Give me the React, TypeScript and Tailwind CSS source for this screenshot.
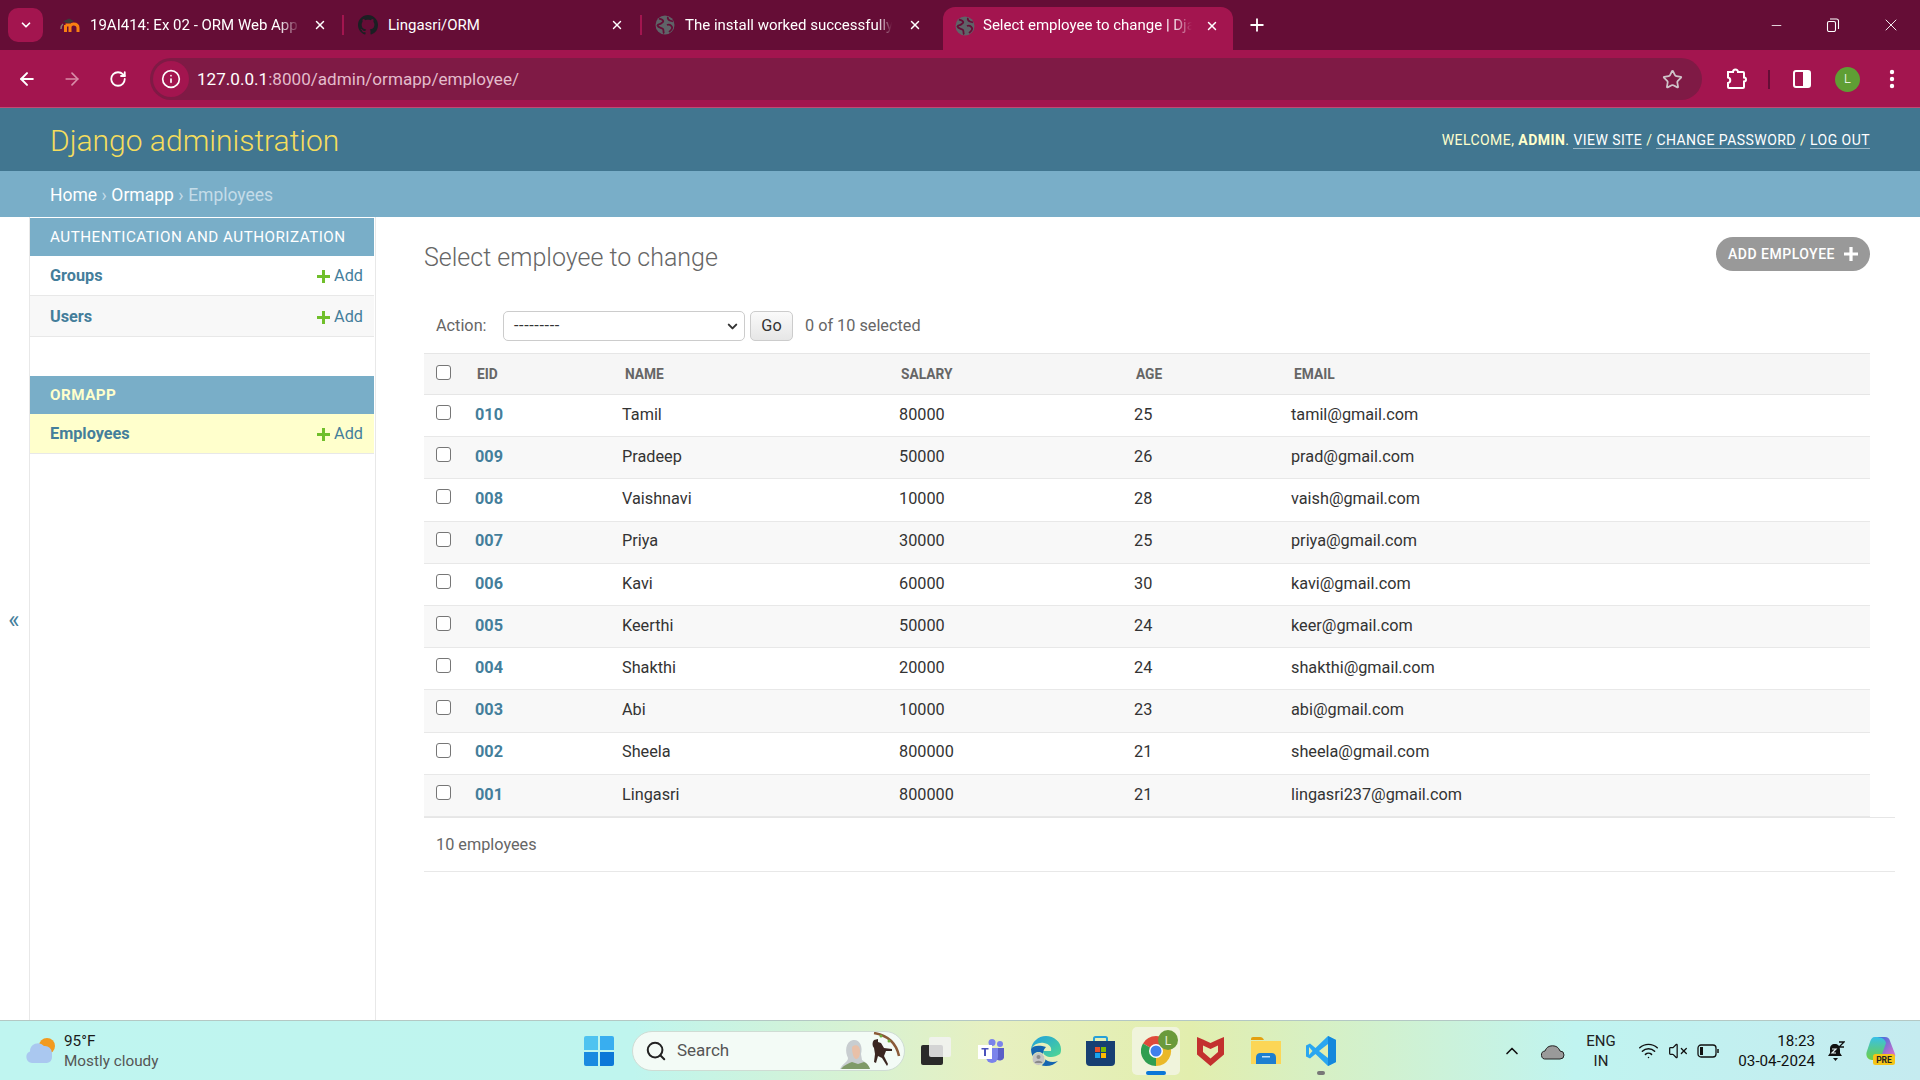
import React from "react";
import { ArrowLeft, ArrowRight, RotateCw, Info, Star, ChevronDown, X, Plus, Minus, ChevronUp, VolumeX, Wifi, Search } from "lucide-react";

const rows = [
  ["010", "Tamil", "80000", "25", "tamil@gmail.com"],
  ["009", "Pradeep", "50000", "26", "prad@gmail.com"],
  ["008", "Vaishnavi", "10000", "28", "vaish@gmail.com"],
  ["007", "Priya", "30000", "25", "priya@gmail.com"],
  ["006", "Kavi", "60000", "30", "kavi@gmail.com"],
  ["005", "Keerthi", "50000", "24", "keer@gmail.com"],
  ["004", "Shakthi", "20000", "24", "shakthi@gmail.com"],
  ["003", "Abi", "10000", "23", "abi@gmail.com"],
  ["002", "Sheela", "800000", "21", "sheela@gmail.com"],
  ["001", "Lingasri", "800000", "21", "lingasri237@gmail.com"],
];

function Globe() {
  return (
    <svg width="20" height="20" viewBox="0 0 20 20" className="shrink-0">
      <circle cx="10" cy="10" r="9.500" fill="#5f6368" />
      <path d="M4 3.500c2 1 3 .5 4 2s-1 2-2 3-3 0-3.500 2C3 13 7 12.500 8 14s0 3 1 4.500M13 2c-1 2 1 3 2 3.500s2 .5 3 1M12 10c2-1 4 0 5 2s-2 4-3 5" stroke="#650d36" strokeWidth="1.800" fill="none" />
    </svg>
  );
}

function Github() {
  return (
    <svg width="20" height="20" viewBox="0 0 16 16" fill="#1b1f23" className="shrink-0">
      <path d="M8 0C3.580 0 0 3.580 0 8c0 3.540 2.290 6.530 5.470 7.590.4.070.55-.17.55-.38 0-.19-.01-.82-.01-1.490-2.010.37-2.530-.49-2.690-.94-.09-.23-.48-.94-.82-1.130-.28-.15-.68-.52-.01-.53.63-.01 1.080.58 1.230.82.720 1.210 1.870.87 2.330.66.070-.52.280-.87.510-1.070-1.780-.2-3.640-.89-3.640-3.950 0-.87.310-1.590.820-2.150-.080-.2-.360-1.020.080-2.120 0 0 .670-.210 2.200.820.640-.180 1.320-.270 2-.270s1.360.090 2 .270c1.530-1.040 2.200-.820 2.200-.820.440 1.100.160 1.920.080 2.120.510.560.820 1.270.820 2.150 0 3.070-1.870 3.750-3.650 3.950.290.250.540.730.540 1.480 0 1.070-.010 1.930-.010 2.200 0 .210.150.460.550.380A8.010 8.010 0 0 0 16 8c0-4.420-3.580-8-8-8z" />
    </svg>
  );
}

function Moodle() {
  return (
    <svg width="20" height="20" viewBox="0 0 20 20" className="shrink-0">
      <path d="M1 14c0-3 .5-4 2-5" stroke="#8a7a70" strokeWidth="1.500" fill="none" />
      <path d="M3 6.500l6-3 5 2.500-5 2.500z" fill="#3a3a3a" />
      <path d="M5.500 17V10M10 17v-5c0-3 3.500-3 3.500-3 3.500 0 4.500 1.500 4.500 4v4M5.500 10h4.500" stroke="#f98012" strokeWidth="3" fill="none" />
    </svg>
  );
}

function TabClose() {
  return <X size={14} strokeWidth={2.500} className="text-white shrink-0" />;
}

function Tabs() {
  return (
    <div className="h-[50px] bg-[#650d36] flex items-start shrink-0 text-white text-[15px]">
      <div className="w-[35px] h-[34px] mt-2 ml-[8px] rounded-[10px] bg-[#a3154f] flex items-center justify-center shrink-0">
        <ChevronDown size={14} strokeWidth={3} />
      </div>
      <div className="w-[301px] h-[34px] mt-2 flex items-center pl-[17px] shrink-0">
        <Moodle />
        <span className="ml-[10px] w-[210px] shrink-0 overflow-hidden whitespace-nowrap [mask-image:linear-gradient(to_right,black_90%,transparent)]">19AI414: Ex 02 - ORM Web App</span>
        <span className="w-[20px] ml-[10px] flex justify-center shrink-0"><TabClose /></span>
        <span className="w-[2px] h-5 bg-[#a3154f] ml-[12px] shrink-0" />
      </div>
      <div className="w-[298px] h-[34px] mt-2 flex items-center pl-[14px] shrink-0">
        <Github />
        <span className="ml-[10px] w-[219px] shrink-0 whitespace-nowrap">Lingasri/ORM</span>
        <span className="w-[20px] flex justify-center shrink-0"><TabClose /></span>
        <span className="w-[2px] h-5 bg-[#a3154f] ml-[13px] shrink-0" />
      </div>
      <div className="w-[301px] h-[34px] mt-2 flex items-center pl-[13px] shrink-0">
        <Globe />
        <span className="ml-[10px] w-[207px] shrink-0 overflow-hidden whitespace-nowrap [mask-image:linear-gradient(to_right,black_93%,transparent)]">The install worked successfully!</span>
        <span className="w-[20px] flex justify-center ml-[13px] shrink-0"><TabClose /></span>
      </div>
      <div className="w-[290px] h-[43px] mt-[7px] rounded-t-[12px] bg-[#a3154f] flex items-center pl-[12px] pb-[6px] shrink-0">
        <Globe />
        <span className="ml-[8px] w-[209px] shrink-0 overflow-hidden whitespace-nowrap [mask-image:linear-gradient(to_right,black_90%,transparent)]">Select employee to change | Django site admin</span>
        <span className="w-[20px] flex justify-center ml-[10px] shrink-0"><TabClose /></span>
      </div>
      <div className="ml-[14px] h-[34px] mt-2 flex items-center shrink-0"><Plus size={20} strokeWidth={2.200} /></div>
      <div className="ml-auto flex items-center h-[34px] mt-2 shrink-0">
        <Minus size={15} strokeWidth={1.300} className="mr-[42px]" />
        <svg width="14" height="14" viewBox="0 0 14 14" fill="none" stroke="white" strokeWidth="1.100" className="mr-[41px]">
          <rect x="1.500" y="3.500" width="8" height="10" rx="1.500" />
          <path d="M4 1h6.500A2 2 0 0 1 12.500 3v8" />
        </svg>
        <X size={20} strokeWidth={1.100} className="mr-[19px]" />
      </div>
    </div>
  );
}

function Toolbar() {
  return (
    <div className="h-[58px] bg-[#a3154f] border-b border-[#c14a73] flex items-center shrink-0 text-white pt-px">
      <ArrowLeft size={20} strokeWidth={2.400} className="ml-[17px]" />
      <ArrowRight size={20} strokeWidth={2} className="ml-[25px] text-[#d98ca8]" />
      <RotateCw size={18} strokeWidth={2.400} className="ml-[27px]" />
      <div className="ml-[23px] h-[42px] w-[1552px] rounded-full bg-[#7f1a45] flex items-center shrink-0">
        <div className="ml-[3px] w-[36px] h-[36px] rounded-full bg-[#a3154f] flex items-center justify-center">
          <Info size={20} strokeWidth={2} />
        </div>
        <div className="ml-[8px] pt-[1px] text-[17.100px] whitespace-nowrap">
          <span>127.0.0.1</span><span className="text-[#e3bccb]">:8000/admin/ormapp/employee/</span>
        </div>
        <Star size={21} strokeWidth={2} className="ml-auto mr-[19px] text-[#cfc4c9]" />
      </div>
      <svg width="22" height="22" viewBox="0 0 22 22" fill="none" stroke="white" strokeWidth="2" className="ml-[23px]">
        <path d="M3 4h5a2.500 2.500 0 0 1 5 0h5a1 1 0 0 1 1 1v4.500a2 2 0 0 1 0 4V19a1 1 0 0 1-1 1H4a1 1 0 0 1-1-1v-4a2.800 2.800 0 0 0 0-5.500z" />
      </svg>
      <span className="w-[2px] h-[19px] bg-[#650d36] ml-[21px]" />
      <svg width="20" height="20" viewBox="0 0 20 20" className="ml-[22px]">
        <rect x="2" y="2" width="16" height="16" rx="2" fill="none" stroke="white" strokeWidth="2" />
        <rect x="11" y="2" width="7" height="16" fill="white" />
      </svg>
      <div className="ml-[23px] w-[25px] h-[25px] rounded-full bg-[#5f9e34] flex items-center justify-center text-[13px] font-light">L</div>
      <svg width="22" height="22" viewBox="0 0 22 22" fill="white" className="ml-[21px]">
        <circle cx="11" cy="4" r="2.200" />
        <circle cx="11" cy="11" r="2.200" />
        <circle cx="11" cy="18" r="2.200" />
      </svg>
    </div>
  );
}

function AddLink() {
  return (
    <span className="flex items-center text-[#447e9b] text-[16.250px]">
      <svg width="13" height="13" viewBox="0 0 13 13" className="mr-[4px]"><path d="M5 0h3v5h5v3H8v5H5V8H0V5h5z" fill="#70bf2b" /></svg>
      Add
    </span>
  );
}

function SideRow({ name, cls }: { name: string; cls: string }) {
  return (
    <div className={`flex items-center justify-between pl-5 pr-[11px] border-b border-[#e8e8e8] ${cls}`}>
      <span className="font-bold text-[#447e9b] text-[16.250px]">{name}</span>
      <AddLink />
    </div>
  );
}

function Sidebar() {
  return (
    <aside className="w-[376px] shrink-0 flex border-r border-[#e8e8e8]">
      <div className="w-[30px] shrink-0 border-r border-[#e8e8e8] flex items-center justify-center text-[#447e9b] text-[24px] pt-[3px] pr-[1px]">«</div>
      <div className="w-[344px] pt-px shrink-0">
        <div className="h-[38px] bg-[#79aec8] text-white text-[15.200px] tracking-[0.5px] flex items-center pl-5 whitespace-nowrap">AUTHENTICATION AND AUTHORIZATION</div>
        <SideRow name="Groups" cls="h-[40px] pt-[2px] bg-white" />
        <SideRow name="Users" cls="h-[41px] pt-[3px] bg-[#f8f8f8]" />
        <div className="h-[39px]" />
        <div className="h-[38px] bg-[#79aec8] text-[#ffffcc] font-bold text-[15.200px] tracking-[0.5px] flex items-center pl-5">ORMAPP</div>
        <SideRow name="Employees" cls="h-[40px] pt-[2px] bg-[#ffffcc]" />
      </div>
    </aside>
  );
}

function Box() {
  return <span className="block w-[15px] h-[15px] rounded-[3px] border border-[#767676] bg-white" />;
}

function Content() {
  return (
    <main className="flex-1 min-w-0 pl-[48px] pr-[25px] pt-[20px] text-[#333]">
      <div className="flex items-start justify-between pr-[25px] h-[74px]">
        <h1 className="text-[25px] font-light text-[#666] mt-[3px] leading-[36px]">Select employee to change</h1>
        <div className="h-[34px] w-[154px] rounded-full bg-[#999] text-white text-[14px] tracking-[0.500px] font-medium flex items-center justify-center gap-[9px]">
          ADD EMPLOYEE
          <svg width="14" height="14" viewBox="0 0 13 13"><path d="M5 0h3v5h5v3H8v5H5V8H0V5h5z" fill="white" /></svg>
        </div>
      </div>
      <div className="h-[42px] flex items-start pl-3 text-[16.250px] text-[#666] pr-[25px]">
        <span className="w-[67px] h-[30px] flex items-center">Action:</span>
        <div className="w-[242px] h-[30px] rounded-[5px] border border-[#ccc] bg-white flex items-center pl-[10px] pr-[4px] justify-between text-[#333] text-[16.250px]">
          <span className="tracking-[0.600px]">---------</span>
          <ChevronDown size={15} strokeWidth={3.200} className="text-[#333]" />
        </div>
        <div className="ml-[5px] w-[43px] h-[30px] rounded-[5px] border border-[#ccc] bg-[linear-gradient(#fafafa,#e6e6e6)] flex items-center justify-center text-[#333] text-[16.250px]">Go</div>
        <span className="ml-3 h-[30px] flex items-center">0 of 10 selected</span>
      </div>
      <div className="mr-[25px]">
        <table className="w-full table-fixed border-collapse text-[16.250px]">
          <colgroup>
            <col className="w-[51px]" />
            <col className="w-[147px]" />
            <col className="w-[277px]" />
            <col className="w-[235px]" />
            <col className="w-[157px]" />
            <col />
          </colgroup>
          <thead>
            <tr className="h-[41px] bg-[#f6f6f6] border-t border-b border-[#e6e6e6] text-[#666] text-[13.750px]">
              <th className="pl-3 pb-[3px] text-left font-normal align-middle"><Box /></th>
              <th className="pl-[2px] text-left font-bold">EID</th>
              <th className="pl-[3px] text-left font-bold">NAME</th>
              <th className="pl-[2px] text-left font-bold">SALARY</th>
              <th className="pl-[2px] text-left font-bold">AGE</th>
              <th className="pl-[3px] text-left font-bold">EMAIL</th>
            </tr>
          </thead>
          <tbody>
            {rows.map((r, i) => (
              <tr key={r[0]} className={`h-[42.200px] border-b border-[#e8e8e8] ${i % 2 ? "bg-[#f8f8f8]" : "bg-white"}`}>
                <td className="pl-3 pb-[6px]"><Box /></td>
                <td className="pb-[1px] font-bold text-[#447e9b]">{r[0]}</td>
                <td className="pb-[1px]">{r[1]}</td>
                <td className="pb-[1px]">{r[2]}</td>
                <td className="pb-[1px]">{r[3]}</td>
                <td className="pb-[1px]">{r[4]}</td>
              </tr>
            ))}
          </tbody>
        </table>
      </div>
      <div className="h-[55px] pt-[2px] border-t border-b border-t-[#e6e6e6] border-b-[#e8e8e8] flex items-center pl-3 text-[#666] text-[16.250px]">10 employees</div>
    </main>
  );
}

function Taskbar() {
  return (
    <div className="h-[60px] shrink-0 border-t border-[#b4c8c4] bg-[linear-gradient(90deg,#bff5f0_0%,#bff5ee_33%,#e7f0c0_52%,#e2eeae_62%,#c0f4f0_82%,#c5ebf0_100%)] flex items-center">
      <svg width="34" height="30" viewBox="0 0 34 30" className="ml-[24px] shrink-0">
        <circle cx="23" cy="10" r="8" fill="#f29a1f" />
        <path d="M8 27a6 6 0 0 1-2-11.500A8 8 0 0 1 20 10a7 7 0 0 1 8 7v4a6 6 0 0 1-5 6z" fill="#aac8f0" />
      </svg>
      <div className="ml-[6px] w-[120px] text-[15.300px] leading-[20px] shrink-0">
        <div className="text-[#1a1a1a]">95°F</div>
        <div className="text-[#555]">Mostly cloudy</div>
      </div>
      <svg width="30" height="30" viewBox="0 0 30 30" className="ml-[400px] shrink-0">
        <path d="M0 2a2 2 0 0 1 2-2h12v14H0z" fill="#4fc3f0" />
        <path d="M16 0h12a2 2 0 0 1 2 2v12H16z" fill="#38aef0" />
        <path d="M0 16h14v14H2a2 2 0 0 1-2-2z" fill="#1a8ae0" />
        <path d="M16 16h14v12a2 2 0 0 1-2 2H16z" fill="#0c78d8" />
      </svg>
      <div className="ml-[18px] w-[273px] h-[40px] rounded-full bg-[#f3fbf6] border border-[#cfdcd4] flex items-center pl-[12px] shrink-0">
        <Search size={22} strokeWidth={2.200} className="text-[#222]" />
        <span className="ml-[10px] text-[17px] text-[#555]">Search</span>
        <svg width="62" height="38" viewBox="0 0 62 38" className="ml-auto mr-[3px]">
          <path d="M1 37c3-6 8-7 8-11-3-6-3-16 5-18 7-1 10 7 8 14l1 6c3 2 6 4 8 9z" fill="#c8cdd0" />
          <path d="M2 37c3-4 8-6 11-7l6 2 6-2c3 1 5 4 6 7z" fill="#7f9a68" />
          <path d="M13 15c3-3 8-2 8 4s-2 8-4 8-4-5-4-12z" fill="#e8c0a8" />
          <path d="M35 1c12 2 22 9 25 23" stroke="#8a5a38" strokeWidth="2.500" fill="none" />
          <circle cx="42" cy="4" r="1.500" fill="#6fb03a" />
          <circle cx="50" cy="9" r="1.500" fill="#6fb03a" />
          <path d="M35 8c-2 2-2 6 0 8l1 6-1 8 2 1 2-7 4 2 5 8 1-2-4-8 2-5 6 0 0-2-8-1-3-5-3-1 0-3z" fill="#3a2620" />
        </svg>
      </div>
      <svg width="30" height="28" viewBox="0 0 30 28" className="ml-[16px] shrink-0">
        <rect x="0" y="8" width="22" height="20" rx="2" fill="#2a2a2a" />
        <rect x="8" y="0" width="22" height="20" rx="2" fill="#f2f2f2" fillOpacity="0.850" />
      </svg>
      <svg width="26" height="24" viewBox="0 0 26 24" className="ml-[27px] shrink-0">
        <circle cx="22" cy="5" r="3" fill="#7b83eb" />
        <circle cx="14" cy="3.500" r="3.500" fill="#7b83eb" />
        <path d="M18 9h8v8a4 4 0 0 1-8 1z" fill="#5b5fc7" />
        <path d="M8 9h12v9a6 6 0 0 1-12 0z" fill="#7b83eb" />
        <rect x="0" y="6" width="14" height="14" fill="#fff" />
        <path d="M3.500 9h7v1.600H8V17H6v-6.400H3.500z" fill="#4b53bc" />
      </svg>
      <svg width="30" height="30" viewBox="0 0 30 30" className="ml-[27px] shrink-0">
        <defs>
          <linearGradient id="edgeA" x1="0" y1="0" x2="1" y2="1">
            <stop offset="0" stopColor="#1f9fe0" />
            <stop offset="1" stopColor="#50d890" />
          </linearGradient>
        </defs>
        <path d="M15 0C7 0 1 6 0 13c3-5 8-7 13-6 5 1 8 4 7 8H12c0 4 4 6 8 6 3 0 6-1 9-3 1-2 1-3 1-5C30 6 23 0 15 0z" fill="url(#edgeA)" />
        <path d="M0 13c0 9 7 17 15 17 5 0 9-2 12-5-5 2-11 1-14-3-2-3-1-8 2-11C9 9 2 9 0 13z" fill="#1565b0" />
        <circle cx="7.500" cy="23" r="6.500" fill="#c4c4c4" stroke="#e8eeb8" strokeWidth="1" />
        <circle cx="7.500" cy="21" r="2" fill="#8a8a8a" />
        <path d="M3.500 27c1-3 7-3 8 0z" fill="#8a8a8a" />
      </svg>
      <svg width="29" height="30" viewBox="0 0 29 30" className="ml-[25px] shrink-0">
        <path d="M8 6V2.500A1.500 1.500 0 0 1 9.500 1h10A1.500 1.500 0 0 1 21 2.500V6" stroke="#27a0d8" strokeWidth="2" fill="none" />
        <path d="M0 5h29v21a4 4 0 0 1-4 4H4a4 4 0 0 1-4-4z" fill="#173f72" />
        <rect x="9" y="11" width="5" height="5" fill="#e8502a" />
        <rect x="15" y="11" width="5" height="5" fill="#7fba00" />
        <rect x="9" y="17" width="5" height="5" fill="#18a4ef" />
        <rect x="15" y="17" width="5" height="5" fill="#ffb900" />
      </svg>
      <div className="ml-[17px] w-[48px] h-[48px] rounded-[5px] bg-[#f0f4dc] relative flex items-start pl-[9px] pt-[3px] shrink-0">
        <svg width="37" height="37" viewBox="0 0 37 37">
          <path d="M2 13.500A15 15 0 0 1 28 13.500L15 21z" fill="#de4a3a" />
          <path d="M28 13.500A15 15 0 0 1 15 36L15 21z" fill="#eab828" />
          <path d="M15 36A15 15 0 0 1 2 13.500L15 21z" fill="#2f9e50" />
          <circle cx="15" cy="21" r="7" fill="#fff" />
          <circle cx="15" cy="21" r="5.500" fill="#3f80ec" />
          <circle cx="27" cy="10" r="10" fill="#6a9a3c" />
          <text x="27" y="14.500" fontSize="12" fill="#e8f0d8" textAnchor="middle" fontFamily="Roboto">L</text>
        </svg>
        <span className="absolute bottom-0 left-[14px] w-[20px] h-[4px] rounded-full bg-[#0a78d8]" />
      </div>
      <svg width="27" height="30" viewBox="0 0 27 30" className="ml-[17px] shrink-0">
        <path d="M0 1l6 2.500L13.500 7 21 3.500 27 1v17.500L13.500 30 0 18.500z" fill="#c3302e" />
        <path d="M6 9.500l7.500 3.500L21 9.500V16l-7.500 6.500L6 16z" fill="#e4eeb0" />
      </svg>
      <svg width="30" height="27" viewBox="0 0 30 27" className="ml-[27px] shrink-0">
        <path d="M0 2a2 2 0 0 1 2-2h7c2 0 3 1 4 3h-13z" fill="#e3a010" />
        <path d="M0 4h30v23H0z" fill="#fcd656" />
        <path d="M5 21c0-4 2-5 5-5h10c3 0 5 1 5 5v6H5z" fill="#1d7fd0" />
        <rect x="11" y="19" width="8" height="1.500" fill="#bfe0f8" />
      </svg>
      <div className="ml-[25px] relative flex shrink-0">
        <svg width="30" height="30" viewBox="0 0 30 30">
          <path d="M22 0l8 4v22l-8 4L9.500 18 4 22.500 0 20.500v-11L4 7.500l5.500 4.500z" fill="#2aa6f0" />
          <path d="M22 8v14l-9-7z" fill="#e2eeae" />
          <path d="M3 11l3.500 4L3 19z" fill="#e2eeae" />
          <path d="M22 0l8 4v22l-8 4z" fill="#1488dc" />
        </svg>
        <span className="absolute top-[35px] left-[11px] w-[8px] h-[4px] rounded-full bg-[#777]" />
      </div>
      <ChevronUp size={20} strokeWidth={2} className="ml-[166px] text-[#111] shrink-0" />
      <svg width="24" height="18" viewBox="0 0 24 18" className="ml-[19px] shrink-0">
        <path d="M5 17a4 4 0 0 1-1-8 8 8 0 0 1 15 0 4 4 0 0 1 0 8z" fill="#9a9a9a" stroke="#222" strokeWidth="1" />
      </svg>
      <div className="ml-[20px] w-[32px] text-center text-[15px] leading-[20px] text-[#222] shrink-0">
        <div>ENG</div>
        <div>IN</div>
      </div>
      <Wifi size={21} strokeWidth={1.700} className="ml-[21px] text-[#111] shrink-0" />
      <VolumeX size={20} strokeWidth={1.500} className="ml-[9px] text-[#111] shrink-0" />
      <svg width="22" height="14" viewBox="0 0 22 14" className="ml-[9px] shrink-0" fill="none">
        <rect x="1" y="1" width="18" height="12" rx="3" stroke="#111" strokeWidth="1.300" />
        <rect x="3" y="3" width="3" height="8" fill="#111" />
        <path d="M21 5v4" stroke="#111" strokeWidth="1.500" />
      </svg>
      <div className="ml-[19px] w-[77px] text-right text-[15.200px] leading-[20px] text-[#111] shrink-0">
        <div>18:23</div>
        <div className="whitespace-nowrap">03-04-2024</div>
      </div>
      <svg width="18" height="20" viewBox="0 0 18 20" className="ml-[12px] shrink-0">
        <path d="M8 3c3.500 0 5 2.500 5 6v3l2 3H1l2-3V8c0-3 1.500-5 5-5z" fill="#111" />
        <path d="M6 17h5l-2.500 3z" fill="#111" />
        <path d="M5 8h4L5 12h4" stroke="#e8f4f4" strokeWidth="1.200" fill="none" />
        <path d="M12 1h5l-5 5h5" stroke="#111" strokeWidth="1.300" fill="none" />
      </svg>
      <svg width="30" height="29" viewBox="0 0 30 29" className="ml-[21px] shrink-0">
        <defs>
          <linearGradient id="copA" x1="0" y1="0" x2="1" y2="1">
            <stop offset="0" stopColor="#2a6fe0" />
            <stop offset="1" stopColor="#f070c8" />
          </linearGradient>
          <linearGradient id="copB" x1="0" y1="0" x2="0" y2="1">
            <stop offset="0" stopColor="#38c0e8" />
            <stop offset="1" stopColor="#70d040" />
          </linearGradient>
        </defs>
        <path d="M10 1h9c3 0 4 1 5 4l5 13c1 3-1 5-4 5H14z" fill="url(#copA)" />
        <path d="M9 1c-3 0-4 2-5 5L1 15c-2 5 1 9 5 9h8l6-17c-1-4-4-6-11-6z" fill="url(#copB)" />
        <rect x="7" y="18" width="22" height="11" rx="2.500" fill="#f5c518" />
        <text x="18" y="27" fontSize="8.500" fontWeight="700" fill="#222" textAnchor="middle" fontFamily="Roboto">PRE</text>
      </svg>
    </div>
  );
}

export default function App() {
  return (
    <div className="h-screen w-[1920px] flex flex-col overflow-hidden bg-white font-['Roboto',sans-serif]">
      <Tabs />
      <Toolbar />
      <header className="h-[63px] shrink-0 bg-[#417690] flex items-center justify-between pl-[50px] pr-[50px]">
        <div className="text-[30px] font-light text-[#f5dd5d] leading-none pt-[2px]">Django administration</div>
        <div className="text-[14px] tracking-[0.450px] text-[#ffffcc] whitespace-nowrap pt-[1px]">
          WELCOME, <strong className="font-bold">ADMIN</strong>.{" "}
          <span className="text-white border-b border-[#9ab7c6]">VIEW SITE</span> /{" "}
          <span className="text-white border-b border-[#9ab7c6]">CHANGE PASSWORD</span> /{" "}
          <span className="text-white border-b border-[#9ab7c6]">LOG OUT</span>
        </div>
      </header>
      <div className="h-[46px] shrink-0 bg-[#79aec8] flex items-center pl-[50px] pr-[50px] pt-[2px] text-[17.500px] text-white">
        <span>Home</span>
        <span className="text-[#c4dce8] mx-[4.500px]">›</span>
        <span>Ormapp</span>
        <span className="text-[#c4dce8] mx-[4.500px]">›</span>
        <span className="text-[#c4dce8]">Employees</span>
      </div>
      <div className="flex-1 min-h-0 flex">
        <Sidebar />
        <Content />
      </div>
      <Taskbar />
    </div>
  );
}
